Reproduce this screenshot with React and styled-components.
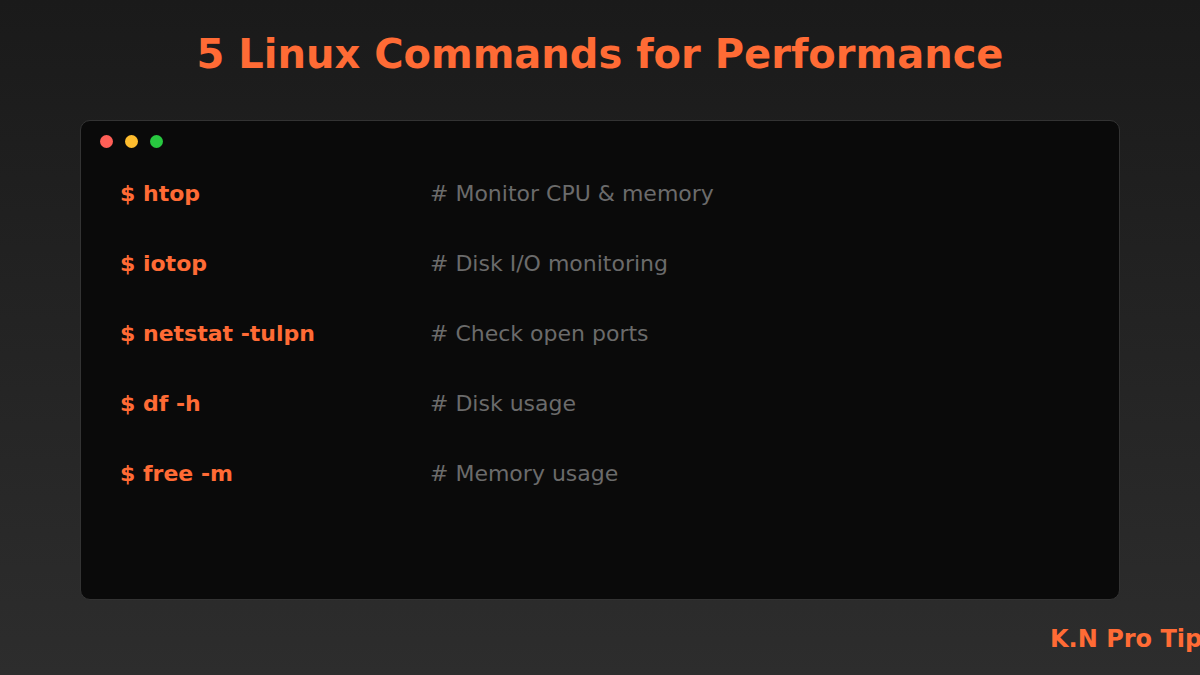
import React from 'react';
import styled, { createGlobalStyle } from 'styled-components';

const GlobalStyle = createGlobalStyle`
  html, body {
    margin: 0;
    padding: 0;
    overflow: hidden;
  }
  body {
    font-family: 'DejaVu Sans', 'Liberation Sans', sans-serif;
  }
`;

const commands = [
  { cmd: '$ htop', note: '# Monitor CPU & memory' },
  { cmd: '$ iotop', note: '# Disk I/O monitoring' },
  { cmd: '$ netstat -tulpn', note: '# Check open ports' },
  { cmd: '$ df -h', note: '# Disk usage' },
  { cmd: '$ free -m', note: '# Memory usage' },
];

const App = () => {
  return (
    <React.Fragment>
      <GlobalStyle />
      <Page>
        <Title>5 Linux Commands for Performance</Title>
        <Terminal>
          <Dots>
            <Dot color='#ff5f57' />
            <Dot color='#ffbd2e' />
            <Dot color='#28c840' />
          </Dots>
          <Lines>
            {commands.map((c) => (
              <Line key={c.cmd}>
                <Command>{c.cmd}</Command>
                <Note>{c.note}</Note>
              </Line>
            ))}
          </Lines>
        </Terminal>
        <Footer>
          <Brand>K.N Pro Tip</Brand>
        </Footer>
      </Page>
    </React.Fragment>
  );
};

const Page = styled.div`
  width: 1200px;
  height: 675px;
  background: linear-gradient(180deg, #1a1a1a 0%, #2d2d2d 100%);
  display: flex;
  flex-direction: column;
  overflow: hidden;
`;

const Title = styled.h1`
  margin: 0;
  height: 120px;
  padding-top: 30px;
  box-sizing: border-box;
  text-align: center;
  font-size: 40px;
  line-height: 48px;
  font-weight: bold;
  color: #ff6b35;
`;

const Terminal = styled.div`
  margin: 0 80px;
  height: 480px;
  box-sizing: border-box;
  background: #0a0a0a;
  border: 1px solid #333333;
  border-radius: 10px;
  padding: 14px 0 0 19px;
`;

const Dots = styled.div`
  display: flex;
  gap: 12px;
`;

const Dot = styled.span`
  width: 13px;
  height: 13px;
  border-radius: 50%;
  background: ${(props) => props.color};
`;

const Lines = styled.div`
  display: flex;
  flex-direction: column;
  padding: 33px 0 0 20px;
  gap: 44px;
`;

const Line = styled.div`
  display: flex;
  height: 26px;
  align-items: center;
  font-size: 22px;
  line-height: 26px;
`;

const Command = styled.span`
  width: 310px;
  font-weight: bold;
  color: #ff6b35;
`;

const Note = styled.span`
  color: #6b6b6b;
`;

const Footer = styled.div`
  padding: 25px 0 0 1050px;
  white-space: nowrap;
`;

const Brand = styled.span`
  font-size: 24px;
  font-weight: bold;
  color: #ff6b35;
`;

export default App;
